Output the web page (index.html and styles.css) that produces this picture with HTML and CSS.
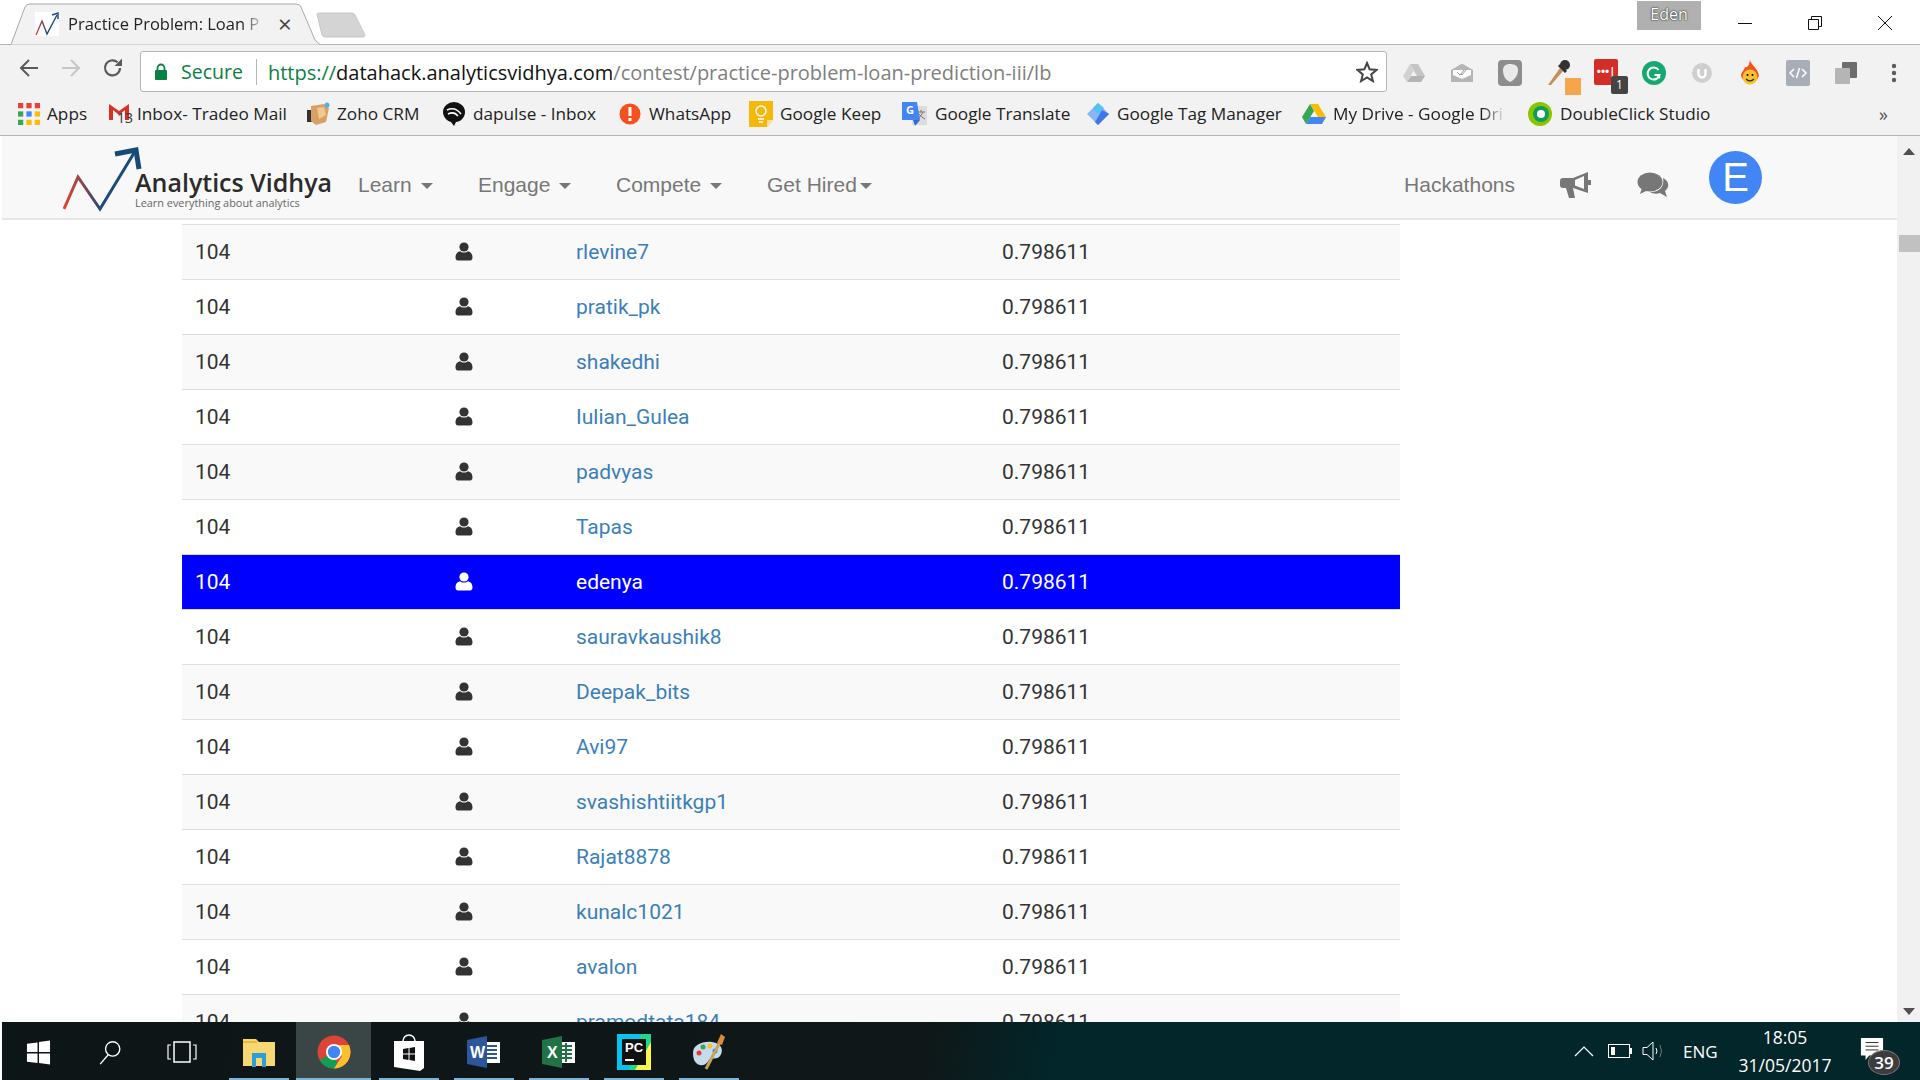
FILE: index.html
```html
<!DOCTYPE html>
<html>
<head>
	<title>Practice Problem: Loan Prediction III</title>
	<link rel="stylesheet" href="styles.css">
</head>
<body>
<svg class="defs" width="0" height="0">
	<defs>
		<symbol id="user" viewBox="0 0 18 19">
			<circle cx="9" cy="5" r="4.6"/>
			<path d="M5.2 9.2C6.2 11 11.8 11 12.8 9.2C15.5 9.8 17.5 11.5 17.5 15.5C17.5 18 16 18.6 14 18.6H4C2 18.6 .5 18 .5 15.5C.5 11.5 2.5 9.8 5.2 9.2Z"/>
		</symbol>
		<linearGradient id="logoLine" x1="0" x2="1" y1="0" y2="0">
			<stop offset="0" stop-color="#e8432a"/>
			<stop offset=".55" stop-color="#1d4a7a"/>
			<stop offset="1" stop-color="#174a78"/>
		</linearGradient>
	</defs>
</svg>
<div class="screen">
	<div class="titlebar">
		<div class="tab">
			<svg class="tab-shape" width="312" height="42" viewBox="0 0 312 42"><path d="M0 41.5H3L17 4Q18 1 22 1H288Q292 1 293 4L307 37L312 41.5" fill="#f2f2f2" stroke="#a9a9a9"/></svg>
			<svg class="favicon" width="24" height="24" viewBox="0 0 24 24"><rect width="24" height="24" fill="#fff"/><path d="M1 23L7 9L12 22L22 3" fill="none" stroke="url(#logoLine)" stroke-width="1.4"/><path d="M17 3L23 1L23 7" fill="none" stroke="#174a78" stroke-width="1.4"/></svg>
			<span class="tab-title">Practice Problem: Loan P</span>
			<span class="tab-close">×</span>
		</div>
		<svg class="new-tab" width="50" height="26" viewBox="0 0 50 26"><path d="M1 2Q1 1 3 1H36Q38 1 39 3L49 23Q49 25 47 25H9Q7 25 6 23Z" fill="#d4d4d4" stroke="#c6c6c6"/></svg>
		<span class="grow"></span>
		<span class="profile">Eden</span>
		<div class="win-btns">
			<svg width="16" height="16" viewBox="0 0 16 16"><path d="M1 8.5H15" stroke="#111"/></svg>
			<svg width="16" height="16" viewBox="0 0 16 16"><path d="M1.5 4.5H11.5V14.5H1.5ZM4.5 4V1.5H14.5V11.5H12" fill="none" stroke="#111"/></svg>
			<svg width="16" height="16" viewBox="0 0 16 16"><path d="M1 1L15 15M15 1L1 15" stroke="#111"/></svg>
		</div>
	</div>

	<div class="toolbar">
		<div class="nav-btns">
			<svg width="22" height="22" viewBox="0 0 22 22"><path d="M20 11H3M11 3L3 11L11 19" fill="none" stroke="#5a5a5a" stroke-width="2"/></svg>
			<svg width="22" height="22" viewBox="0 0 22 22"><path d="M2 11H19M11 3L19 11L11 19" fill="none" stroke="#c6c6c6" stroke-width="2"/></svg>
			<svg width="22" height="22" viewBox="0 0 22 22"><path d="M18 11A7.5 7.5 0 1 1 15.5 5.3" fill="none" stroke="#5a5a5a" stroke-width="2.2"/><path d="M12.5 9H20V1.5Z" fill="#5a5a5a"/></svg>
		</div>
		<div class="omnibox">
			<svg class="lock" width="14" height="18" viewBox="0 0 14 18"><path d="M3.5 8V5A3.5 3.5 0 0 1 10.5 5V8" fill="none" stroke="#0b8043" stroke-width="1.8"/><rect x="1" y="7" width="12" height="10" rx="1" fill="#0b8043"/></svg>
			<span class="secure">Secure</span>
			<span class="omni-sep"></span>
			<span class="url"><span class="scheme">https://</span><span class="host">datahack.analyticsvidhya.com</span>/contest/practice-problem-loan-prediction-iii/lb</span>
			<span class="grow"></span>
			<svg class="star" width="22" height="22" viewBox="0 0 22 22"><path d="M11 2L13.6 8.3L20.5 8.9L15.2 13.4L16.9 20.1L11 16.5L5.1 20.1L6.8 13.4L1.5 8.9L8.4 8.3Z" fill="none" stroke="#444" stroke-width="2"/></svg>
		</div>
		<div class="extensions">
			<svg width="24" height="24" viewBox="0 0 24 24"><path d="M8 3H16L23 15H15Z" fill="#c4c4c4"/><path d="M8 3L1 15L5 21L12 9Z" fill="#d2d2d2"/><path d="M5 21H19L23 15H9Z" fill="#b4b4b4"/></svg>
			<svg width="24" height="24" viewBox="0 0 24 24"><path d="M1 9L8 5Q12 1 16 5L23 9V21H1Z" fill="#b5b5b5"/><path d="M3 9H21V14L12 18L3 14Z" fill="#fff"/><path d="M7 11L10 14L14 9M11 13L12 14L16 9" fill="none" stroke="#999"/></svg>
			<svg width="24" height="26" viewBox="0 0 24 26"><rect width="24" height="26" rx="4" fill="#8d8d8d"/><path d="M12 4C17 4 20 6 20 10C20 16 16 20 12 22C7 20 5 15 5 10C5 6 8 4 12 4Z" fill="#e9e9e9"/></svg>
			<span class="ext-badged">
				<svg width="26" height="28" viewBox="0 0 26 28"><path d="M2 26L14 9L17 12L5 26Z" fill="#c78d56"/><path d="M13 6L20 13" stroke="#333" stroke-width="3"/><circle cx="19" cy="6" r="5" fill="#333"/></svg>
				<span class="orange-dot"></span>
			</span>
			<span class="ext-badged">
				<span class="lastpass">•••|</span>
				<span class="lp-count">1</span>
			</span>
			<svg width="24" height="24" viewBox="0 0 24 24"><circle cx="12" cy="12" r="12" fill="#15a871"/><path d="M16.5 9A6 6 0 1 0 17.5 14H12.5" fill="none" stroke="#fff" stroke-width="2"/><path d="M15 14L18 17" stroke="#fff" stroke-width="2"/></svg>
			<svg width="24" height="24" viewBox="0 0 24 24"><circle cx="12" cy="12" r="10" fill="#cfcfcf"/><path d="M8.5 8V13A3.5 3.5 0 0 0 15.5 13V8" fill="none" stroke="#fff" stroke-width="2.5"/></svg>
			<svg width="24" height="28" viewBox="0 0 24 28"><path d="M12 1C13 6 20 9 21 17A9.5 9.5 0 0 1 3 17C3 13 6 12 7 8C9 9 11 7 12 1Z" fill="#f1531e"/><circle cx="12" cy="18" r="7.5" fill="#fbc02d"/><circle cx="9.5" cy="16" r="1"/><circle cx="14.5" cy="16" r="1"/><path d="M8 20Q12 24 16 20" fill="none" stroke="#333" stroke-width="1.2"/></svg>
			<svg width="24" height="26" viewBox="0 0 24 26"><rect width="24" height="26" rx="2" fill="#a8aeb8"/><path d="M8 9L4 13L8 17M16 9L20 13L16 17M13.5 8L10.5 18" fill="none" stroke="#fff" stroke-width="1.5"/></svg>
			<svg width="24" height="24" viewBox="0 0 24 24"><rect x="8" y="1" width="15" height="16" rx="1" fill="#6d6d6d"/><rect x="1" y="7" width="15" height="16" rx="1" fill="#b5b5b5"/></svg>
			<svg width="24" height="24" viewBox="0 0 24 24"><circle cx="12" cy="5" r="2.2" fill="#5c5c5c"/><circle cx="12" cy="12" r="2.2" fill="#5c5c5c"/><circle cx="12" cy="19" r="2.2" fill="#5c5c5c"/></svg>
		</div>
	</div>

	<div class="bookmarks">
		<span class="bm"><svg width="22" height="22" viewBox="0 0 21 21"><rect width="5" height="5" fill="#ea4335"/><rect x="8" width="5" height="5" fill="#ea4335"/><rect x="16" width="5" height="5" fill="#ea4335"/><rect y="8" width="5" height="5" fill="#34a853"/><rect x="8" y="8" width="5" height="5" fill="#4285f4"/><rect x="16" y="8" width="5" height="5" fill="#fbbc05"/><rect y="16" width="5" height="5" fill="#34a853"/><rect x="8" y="16" width="5" height="5" fill="#fbbc05"/><rect x="16" y="16" width="5" height="5" fill="#fbbc05"/></svg>Apps</span>
		<span class="bm"><span class="gmail"><svg width="22" height="20" viewBox="0 0 22 20"><path d="M1 2V18H5V8L11 13L17 8V18H21V2L11 9Z" fill="#d93025"/></svg><span class="gmail-count">13</span></span>Inbox- Tradeo Mail</span>
		<span class="bm"><svg width="24" height="24" viewBox="0 0 24 24"><rect x="1" y="8" width="5" height="12" fill="#333"/><path d="M5 4L18 2L23 6L20 20L10 23L5 19Z" fill="#d9a066"/><path d="M11 6L18 5L20 13L13 17Z" fill="#f0c98f"/><circle cx="21" cy="3" r="2.5" fill="#49b5e6"/></svg>Zoho CRM</span>
		<span class="bm"><svg width="24" height="24" viewBox="0 0 24 24"><path d="M1 10A11 10 0 0 1 23 10C23 16 18 20 14 20L12 24L9 20C5 19 1 15 1 10Z" fill="#111"/><path d="M5 8Q13 4 19 12M6 12Q12 9 16 14" fill="none" stroke="#fff" stroke-width="1.5"/></svg>dapulse - Inbox</span>
		<span class="bm"><svg width="24" height="24" viewBox="0 0 24 24"><circle cx="12" cy="12" r="10.5" fill="#f4511e"/><rect x="10.5" y="5" width="3" height="9" fill="#fff"/><rect x="10.5" y="16" width="3" height="3" fill="#fff"/></svg>WhatsApp</span>
		<span class="bm"><svg width="24" height="26" viewBox="0 0 24 26"><path d="M0 0H24V19L18 26H0Z" fill="#f6b70b"/><path d="M24 19H18V26Z" fill="#fce49a"/><circle cx="12" cy="10" r="5" fill="none" stroke="#fff" stroke-width="1.5"/><path d="M9 18H15M10 21H14" stroke="#fff" stroke-width="1.5"/></svg>Google Keep</span>
		<span class="bm"><svg width="26" height="26" viewBox="0 0 26 26"><path d="M10 5H25V24H10Z" fill="#dcdcdc"/><path d="M0 1H15L18 19H0Z" fill="#4285f4"/><path d="M11 19H18L13 25Z" fill="#3367d6"/><text x="4" y="13" class="g-letter">G</text><path d="M16 11H23M19 9V11M21 11Q19 16 15 18M17 13Q19 16 23 18" fill="none" stroke="#777"/></svg>Google Translate</span>
		<span class="bm"><svg width="24" height="24" viewBox="0 0 24 24"><path d="M12 1L23 12L12 23L1 12Z" fill="#8ab4f8"/><path d="M12 1L7 6L12 12L18 6Z" fill="#4fc3f7"/><path d="M16 8L23 12L12 23L9 20Z" fill="#3d78e6"/></svg>Google Tag Manager</span>
		<span class="bm bm-fade"><svg width="24" height="22" viewBox="0 0 24 22"><path d="M8 1H16L24 14H16Z" fill="#fbbc05"/><path d="M8 1L0 14L4 21L12 8Z" fill="#34a853"/><path d="M4 21H20L24 14H8Z" fill="#4285f4"/></svg>My Drive - Google Dri</span>
		<span class="bm"><svg width="26" height="26" viewBox="0 0 26 26"><circle cx="13" cy="13" r="12" fill="#8bc400"/><circle cx="14" cy="13" r="8" fill="#0f9d58"/><circle cx="14" cy="13" r="4" fill="#fff"/></svg>DoubleClick Studio</span>
		<span class="bm-more">»</span>
	</div>

	<div class="content">
		<div class="page">
			<nav class="sitenav">
				<div class="logo">
					<svg class="logo-mark" width="85" height="70" viewBox="0 0 85 70"><path d="M1 65L15 33L37 65L71 9" fill="none" stroke="url(#logoLine)" stroke-width="3"/><path d="M52 10L73 6L76 25" fill="none" stroke="#174a78" stroke-width="5"/></svg>
					<div class="logo-name">Analytics Vidhya</div>
					<div class="logo-sub">Learn everything about analytics</div>
				</div>
				<div class="menu">
					<a>Learn<i class="caret"></i></a>
					<a>Engage<i class="caret"></i></a>
					<a>Compete<i class="caret"></i></a>
					<a class="tight">Get Hired<i class="caret"></i></a>
				</div>
				<span class="grow"></span>
				<a class="menu-right">Hackathons</a>
				<svg class="nav-icon" width="32" height="28" viewBox="0 0 32 28"><path d="M29 1V22L14 17H4A3 3 0 0 1 1 14V10A3 3 0 0 1 4 7H14Z" fill="#777"/><path d="M7 17H14L16 27H10Z" fill="#777"/><path d="M25 5V18L16 14.5V9Z" fill="#f8f8f8"/><rect x="29" y="9" width="3" height="5" fill="#777"/></svg>
				<svg class="nav-icon" width="32" height="26" viewBox="0 0 32 26"><ellipse cx="13" cy="10" rx="12.5" ry="9.5" fill="#777"/><path d="M5 16L3 22L11 18Z" fill="#777"/><path d="M26 6C30 8 32 11 31 15C30 17 29 18 28 19L30 25L23 21C20 22 16 22 13 20C21 21 28 15 26 6Z" fill="#777"/></svg>
				<div class="avatar">E</div>
			</nav>
			<div class="board">
				<table class="lb">
					<colgroup><col class="c-rank"><col class="c-icon"><col class="c-name"><col></colgroup>
					<tr><td>104</td><td><svg class="person"><use href="#user"/></svg></td><td><a>rlevine7</a></td><td>0.798611</td></tr>
					<tr><td>104</td><td><svg class="person"><use href="#user"/></svg></td><td><a>pratik_pk</a></td><td>0.798611</td></tr>
					<tr><td>104</td><td><svg class="person"><use href="#user"/></svg></td><td><a>shakedhi</a></td><td>0.798611</td></tr>
					<tr><td>104</td><td><svg class="person"><use href="#user"/></svg></td><td><a>Iulian_Gulea</a></td><td>0.798611</td></tr>
					<tr><td>104</td><td><svg class="person"><use href="#user"/></svg></td><td><a>padvyas</a></td><td>0.798611</td></tr>
					<tr><td>104</td><td><svg class="person"><use href="#user"/></svg></td><td><a>Tapas</a></td><td>0.798611</td></tr>
					<tr class="me"><td>104</td><td><svg class="person"><use href="#user"/></svg></td><td><a>edenya</a></td><td>0.798611</td></tr>
					<tr><td>104</td><td><svg class="person"><use href="#user"/></svg></td><td><a>sauravkaushik8</a></td><td>0.798611</td></tr>
					<tr><td>104</td><td><svg class="person"><use href="#user"/></svg></td><td><a>Deepak_bits</a></td><td>0.798611</td></tr>
					<tr><td>104</td><td><svg class="person"><use href="#user"/></svg></td><td><a>Avi97</a></td><td>0.798611</td></tr>
					<tr><td>104</td><td><svg class="person"><use href="#user"/></svg></td><td><a>svashishtiitkgp1</a></td><td>0.798611</td></tr>
					<tr><td>104</td><td><svg class="person"><use href="#user"/></svg></td><td><a>Rajat8878</a></td><td>0.798611</td></tr>
					<tr><td>104</td><td><svg class="person"><use href="#user"/></svg></td><td><a>kunalc1021</a></td><td>0.798611</td></tr>
					<tr><td>104</td><td><svg class="person"><use href="#user"/></svg></td><td><a>avalon</a></td><td>0.798611</td></tr>
					<tr><td>104</td><td><svg class="person"><use href="#user"/></svg></td><td><a>pramodtata184</a></td><td>0.798611</td></tr>
				</table>
			</div>
		</div>
		<div class="scrollbar">
			<span class="arrow-up"></span>
			<span class="thumb"></span>
			<span class="grow"></span>
			<span class="arrow-down"></span>
		</div>
	</div>

	<div class="taskbar">
		<div class="tb-system">
			<span class="tb-slot"><svg width="25" height="25" viewBox="0 0 26 26"><path d="M1 4L12 2.5V12.5H1ZM13.5 2.2L25 .5V12.5H13.5ZM1 14H12V24L1 22.5ZM13.5 14H25V25.5L13.5 24Z" fill="#fff"/></svg></span>
			<span class="tb-slot"><svg width="24" height="25" viewBox="0 0 26 28"><circle cx="16" cy="10" r="8" fill="none" stroke="#fff" stroke-width="1.5"/><path d="M11 16.5L2 27" stroke="#fff" stroke-width="1.5"/></svg></span>
			<span class="tb-slot"><svg width="30" height="22" viewBox="0 0 30 22"><rect x="7" y="1" width="16" height="20" fill="none" stroke="#fff" stroke-width="1.5"/><path d="M4 4H1V18H4M26 4H29V18H26" fill="none" stroke="#fff" stroke-width="1.2"/></svg></span>
		</div>
		<div class="tb-apps">
			<span class="tb-app"><svg width="34" height="32" viewBox="0 0 34 32"><path d="M1 3H14L17 6H33V30H1Z" fill="#f7d774"/><rect x="1" y="5" width="14" height="2" fill="#e8b83a"/><path d="M10 31V17H24V31H20V22H14V31Z" fill="#2a9fd8"/></svg></span>
			<span class="tb-app active"><svg width="34" height="34" viewBox="0 0 34 34"><circle cx="17" cy="17" r="16.5" fill="#db4437"/><path d="M17 17L2.7 25.25A16.5 16.5 0 0 0 21 33Z" fill="#0f9d58"/><path d="M17 10H32A16.5 16.5 0 0 1 17 33.5L25 21Z" fill="#fbc02d"/><circle cx="17" cy="17" r="8" fill="#fff"/><circle cx="17" cy="17" r="6.2" fill="#4285f4"/></svg></span>
			<span class="tb-app"><svg width="34" height="40" viewBox="0 0 34 40"><path d="M11 9A6 6 0 0 1 23 9" fill="none" stroke="#fff" stroke-width="1.5"/><path d="M2 9H32V36L28 39L2 35Z" fill="#fff"/><path d="M11 17L16.5 16V21.5H11ZM17.5 16L23 15V21.5H17.5ZM11 22.5H16.5V28L11 27ZM17.5 22.5H23V29L17.5 28Z" fill="#111"/></svg></span>
			<span class="tb-app"><svg width="34" height="34" viewBox="0 0 34 34"><path d="M14 7H33V28H14Z" fill="#fff"/><path d="M18 11H30M18 15H30M18 19H30M18 23H30" stroke="#2b579a" stroke-width="2"/><path d="M0 5L20 1V33L0 29Z" fill="#2b579a"/><text x="3" y="23" class="app-letter">W</text></svg></span>
			<span class="tb-app"><svg width="34" height="34" viewBox="0 0 34 34"><path d="M14 7H33V28H14Z" fill="#fff"/><path d="M19 11H30M19 15H30M19 19H30M19 23H30M24 8V27" stroke="#217346" stroke-width="2"/><path d="M0 5L20 1V33L0 29Z" fill="#217346"/><text x="5" y="23" class="app-letter">X</text></svg></span>
			<span class="tb-app"><svg width="34" height="36" viewBox="0 0 34 36"><rect width="34" height="36" fill="#21d789"/><path d="M0 0H24L12 36H0Z" fill="#07c3f2"/><path d="M18 36L34 8V36Z" fill="#fcf84a"/><rect x="5" y="5" width="24" height="26" fill="#111"/><text x="8" y="18" class="pc-letter">PC</text><rect x="8" y="25" width="9" height="2" fill="#fff"/></svg></span>
			<span class="tb-app"><svg width="38" height="38" viewBox="0 0 38 38"><path d="M3 20C3 12 12 8 22 9C32 10 34 18 30 23C27 27 22 24 19 27C17 30 15 33 10 32C5 31 3 26 3 20Z" fill="#c5dcec"/><circle cx="9" cy="20" r="2.5" fill="#e53935"/><circle cx="13" cy="14" r="2.5" fill="#43a047"/><circle cx="20" cy="13" r="2.5" fill="#fbc02d"/><circle cx="25" cy="18" r="2.5" fill="#1e88e5"/><path d="M16 36L30 9" stroke="#c9a25a" stroke-width="3"/><path d="M27 10L31 1L35 4L32 12Z" fill="#d98a3a"/></svg></span>
		</div>
		<span class="grow"></span>
		<div class="tray">
			<svg class="t-chevron" width="20" height="12" viewBox="0 0 20 12"><path d="M1 11L10 2L19 11" fill="none" stroke="#fff" stroke-width="1.2"/></svg>
			<svg class="t-battery" width="24" height="14" viewBox="0 0 24 14"><rect x=".5" y=".5" width="21" height="13" fill="none" stroke="#fff"/><rect x="3" y="3" width="4" height="8" fill="#fff"/><rect x="22" y="4" width="2" height="6" fill="#fff"/></svg>
			<svg class="t-sound" width="24" height="20" viewBox="0 0 24 20"><path d="M1 6.5H5L11 1V19L5 13.5H1Z" fill="none" stroke="#fff"/><path d="M14 7Q16 10 14 13" fill="none" stroke="#fff"/><path d="M18 4Q21 10 18 16" fill="none" stroke="#778"/></svg>
			<span class="t-lang">ENG</span>
			<div class="clock"><div>18:05</div><div>31/05/2017</div></div>
			<div class="notif">
				<svg width="24" height="26" viewBox="0 0 26 26"><path d="M1 1H25V20H10L6 25V20H1Z" fill="#fff"/><path d="M6 6H20M6 10H20M6 14H20" stroke="#222"/></svg>
				<span class="notif-count">39</span>
			</div>
		</div>
	</div>
</div>
</body>
</html>
```

FILE: styles.css
```css
html, body {
	margin: 0;
	height: 100%;
	overflow: hidden;
	background: #fff;
}
body {
	font-family: "Open Sans", sans-serif;
}
.defs {
	display: block;
	height: 0;
}
.grow {
	flex: 1;
}
.screen {
	display: flex;
	flex-direction: column;
	height: 1080px;
}

/* window title row */
.titlebar {
	display: flex;
	align-items: flex-start;
	height: 44px;
	flex: none;
	padding-left: 8px;
	border-bottom: 1px solid #b5b5b5;
}
.tab {
	position: relative;
	display: flex;
	align-items: center;
	width: 312px;
	height: 42px;
	margin-top: 3px;
}
.tab-shape {
	position: absolute;
	left: 0;
	top: 0;
}
.favicon {
	position: relative;
	margin-left: 27px;
}
.tab-title {
	position: relative;
	width: 197px;
	margin: -2px 0 0 9px;
	font-size: 16.5px;
	color: #222;
	white-space: nowrap;
	overflow: hidden;
	-webkit-mask-image: linear-gradient(90deg, #000 88%, transparent);
	mask-image: linear-gradient(90deg, #000 88%, transparent);
}
.tab-close {
	position: relative;
	margin-left: 13px;
	font-size: 24px;
	line-height: 24px;
	color: #444;
}
.new-tab {
	margin: 12px 0 0 -4px;
}
.profile {
	width: 64px;
	height: 29px;
	margin-top: 1px;
	background: #b0b0b0;
	color: #fff;
	font-size: 16px;
	line-height: 26px;
	text-align: center;
	text-shadow: 0 0 2px #222, 0 0 1px #222;
}
.win-btns {
	display: flex;
	gap: 54px;
	width: 219px;
	padding: 15px 0 0 36px;
	box-sizing: border-box;
}

/* address bar */
.toolbar {
	display: flex;
	align-items: flex-start;
	height: 47px;
	flex: none;
	background: #f2f2f2;
}
.nav-btns {
	display: flex;
	gap: 20px;
	width: 140px;
	padding: 12px 0 0 18px;
	box-sizing: border-box;
}
.omnibox {
	display: flex;
	align-items: center;
	width: 1247px;
	height: 41px;
	margin-top: 6px;
	padding: 0 8px 0 13px;
	box-sizing: border-box;
	background: #fff;
	border: 1px solid #b5b5b5;
	border-radius: 3px;
	font-size: 19.5px;
}
.secure {
	margin-left: 13px;
	color: #0b8043;
}
.omni-sep {
	width: 1px;
	height: 26px;
	margin: 0 11px 0 13px;
	background: #b8b8b8;
}
.url {
	margin-top: 1px;
	color: #808080;
	font-size: 20px;
	white-space: nowrap;
}
.scheme {
	color: #0b8043;
}
.host {
	color: #111;
}
.extensions {
	display: flex;
	align-items: center;
	gap: 24px;
	padding: 8px 0 0 15px;
	height: 47px;
	box-sizing: border-box;
}
.ext-badged {
	position: relative;
	display: block;
	width: 24px;
	height: 28px;
}
.orange-dot {
	position: absolute;
	right: -11px;
	bottom: -8px;
	width: 16px;
	height: 17px;
	background: #f5a64a;
}
.lastpass {
	display: block;
	width: 24px;
	height: 26px;
	background: #d32d27;
	border-radius: 2px;
	color: #fff;
	font-size: 11px;
	font-weight: 700;
	line-height: 24px;
	text-align: center;
}
.lp-count {
	position: absolute;
	right: -10px;
	bottom: -7px;
	width: 17px;
	height: 18px;
	background: #444;
	border-radius: 2px;
	color: #fff;
	font-size: 12px;
	line-height: 18px;
	text-align: center;
}

/* bookmarks */
.bookmarks {
	display: grid;
	grid-template-columns: 90px 198px 136px 176px 131px 153px 184px 216px 225px 1fr auto;
	align-items: center;
	height: 44px;
	flex: none;
	padding-left: 18px;
	box-sizing: border-box;
	background: #f2f2f2;
	border-bottom: 1px solid #b5b5b5;
	font-size: 17.2px;
	color: #222;
}
.bm {
	display: flex;
	align-items: center;
	gap: 7px;
	white-space: nowrap;
	overflow: hidden;
}
.bm svg {
	flex: none;
}
.bm-fade {
	width: 204px;
	-webkit-mask-image: linear-gradient(90deg, #000 88%, transparent);
	mask-image: linear-gradient(90deg, #000 88%, transparent);
}
.gmail {
	position: relative;
	display: block;
	height: 24px;
}
.gmail-count {
	position: absolute;
	left: 9px;
	top: 8px;
	font-size: 14px;
	line-height: 16px;
	color: #333;
}
.g-letter {
	font-size: 11px;
	font-weight: 700;
	fill: #fff;
}
.bm-more {
	margin-right: 32px;
	font-size: 18px;
	color: #555;
}

/* page inside the window */
.content {
	display: flex;
	flex: 1;
	min-height: 0;
	overflow: hidden;
}
.page {
	flex: 1;
	min-width: 0;
	display: flex;
	flex-direction: column;
	margin-left: 2px;
}
.sitenav {
	display: flex;
	align-items: center;
	height: 82px;
	flex: none;
	padding-left: 63px;
	padding-right: 135px;
	background: #f8f8f8;
	border-bottom: 2px solid #e7e7e7;
	font-family: "Liberation Sans", sans-serif;
	color: #777;
	font-size: 21px;
}
.logo {
	position: relative;
	width: 293px;
	height: 66px;
	box-sizing: border-box;
	padding: 24px 0 0 70px;
}
.logo-mark {
	position: absolute;
	left: -2px;
	top: 0;
}
.logo-name {
	font-family: "Open Sans", sans-serif;
	font-weight: 600;
	font-size: 25px;
	line-height: 29px;
	color: #2b2b2b;
	white-space: nowrap;
}
.logo-sub {
	font-family: "Open Sans", sans-serif;
	font-size: 10.9px;
	line-height: 12px;
	color: #666;
	white-space: nowrap;
}
.menu {
	display: grid;
	grid-template-columns: 120px 138px 151px auto;
	margin-top: 16px;
}
.caret {
	display: inline-block;
	margin-left: 9px;
	vertical-align: middle;
	border-top: 6px solid #777;
	border-left: 6px solid transparent;
	border-right: 6px solid transparent;
}
.tight .caret {
	margin-left: 3px;
}
.menu-right {
	margin-top: 16px;
}
.nav-icon {
	margin-left: 44px;
	margin-top: 16px;
}
.nav-icon + .nav-icon {
	margin-left: 46px;
}
.avatar {
	width: 53px;
	height: 53px;
	margin-left: 40px;
	border-radius: 50%;
	background: #4285f4;
	color: #fff;
	font-size: 40px;
	line-height: 53px;
	text-align: center;
}

/* leaderboard */
.board {
	flex: 1;
	min-height: 0;
	overflow: hidden;
	padding: 4px 0 0 180px;
}
.lb {
	width: 1218px;
	table-layout: fixed;
	border-collapse: collapse;
	border-top: 1px solid #ddd;
	font-family: Roboto, sans-serif;
	font-size: 21px;
	color: #333;
}
.lb td {
	height: 54px;
	padding: 0 13px;
	border-bottom: 1px solid #ddd;
}
.lb tr:nth-child(odd) {
	background: #f9f9f9;
}
.lb a {
	color: #3b7fba;
}
.lb tr.me {
	background: #00f;
	color: #fff;
}
.lb tr.me a {
	color: #fff;
}
.c-rank {
	width: 260px;
}
.c-icon {
	width: 121px;
}
.c-name {
	width: 426px;
}
.person {
	display: block;
	width: 18px;
	height: 19px;
	margin-top: -1px;
	fill: #333;
}
.me .person {
	fill: #fff;
}
.scrollbar {
	display: flex;
	flex-direction: column;
	align-items: center;
	width: 23px;
	flex: none;
	background: #f1f1f1;
}
.arrow-up {
	margin-top: 12px;
	border-bottom: 7px solid #505050;
	border-left: 6px solid transparent;
	border-right: 6px solid transparent;
}
.thumb {
	width: 21px;
	height: 17px;
	margin: 80px 0 0 2px;
	background: #c1c1c1;
}
.arrow-down {
	margin-bottom: 7px;
	border-top: 7px solid #505050;
	border-left: 6px solid transparent;
	border-right: 6px solid transparent;
}

/* windows taskbar */
.taskbar {
	display: flex;
	align-items: stretch;
	height: 58px;
	flex: none;
	margin-left: 2px;
	background: linear-gradient(100deg, #0e1516 0, #0f1718 48%, #02262a 55%, #02262a 100%);
	color: #fff;
}
.tb-system {
	display: flex;
}
.tb-slot {
	display: flex;
	align-items: center;
	justify-content: center;
	width: 72px;
	padding-top: 2px;
}
.tb-apps {
	display: flex;
	margin-left: 3px;
}
.tb-app {
	position: relative;
	display: flex;
	align-items: center;
	justify-content: center;
	width: 75px;
	padding-top: 2px;
	box-sizing: border-box;
}
.tb-app::after {
	content: "";
	position: absolute;
	left: 8px;
	right: 7px;
	bottom: 0;
	height: 2px;
	background: #7ab6dc;
}
.tb-app.active {
	background: #3a4545;
}
.tb-app.active::after {
	left: 0;
	right: 0;
}
.app-letter {
	font-family: "Liberation Sans", sans-serif;
	font-size: 16px;
	font-weight: 700;
	fill: #fff;
}
.pc-letter {
	font-family: "Liberation Sans", sans-serif;
	font-size: 13px;
	font-weight: 700;
	fill: #fff;
}
.tray {
	display: flex;
	align-items: center;
	font-size: 17px;
}
.t-chevron {
	margin-right: 14px;
}
.t-battery {
	margin-right: 10px;
}
.t-sound {
	margin-right: 17px;
}
.t-lang {
	width: 43px;
}
.clock {
	width: 118px;
	font-size: 17.5px;
	line-height: 28px;
	text-align: center;
}
.notif {
	position: relative;
	width: 76px;
	padding-left: 16px;
	box-sizing: border-box;
}
.notif-count {
	position: absolute;
	left: 24px;
	top: 14px;
	width: 30px;
	height: 23px;
	border-radius: 50%;
	background: #3c3c3c;
	border: 1px solid #777;
	font-size: 17px;
	font-weight: 600;
	line-height: 23px;
	text-align: center;
}
```
